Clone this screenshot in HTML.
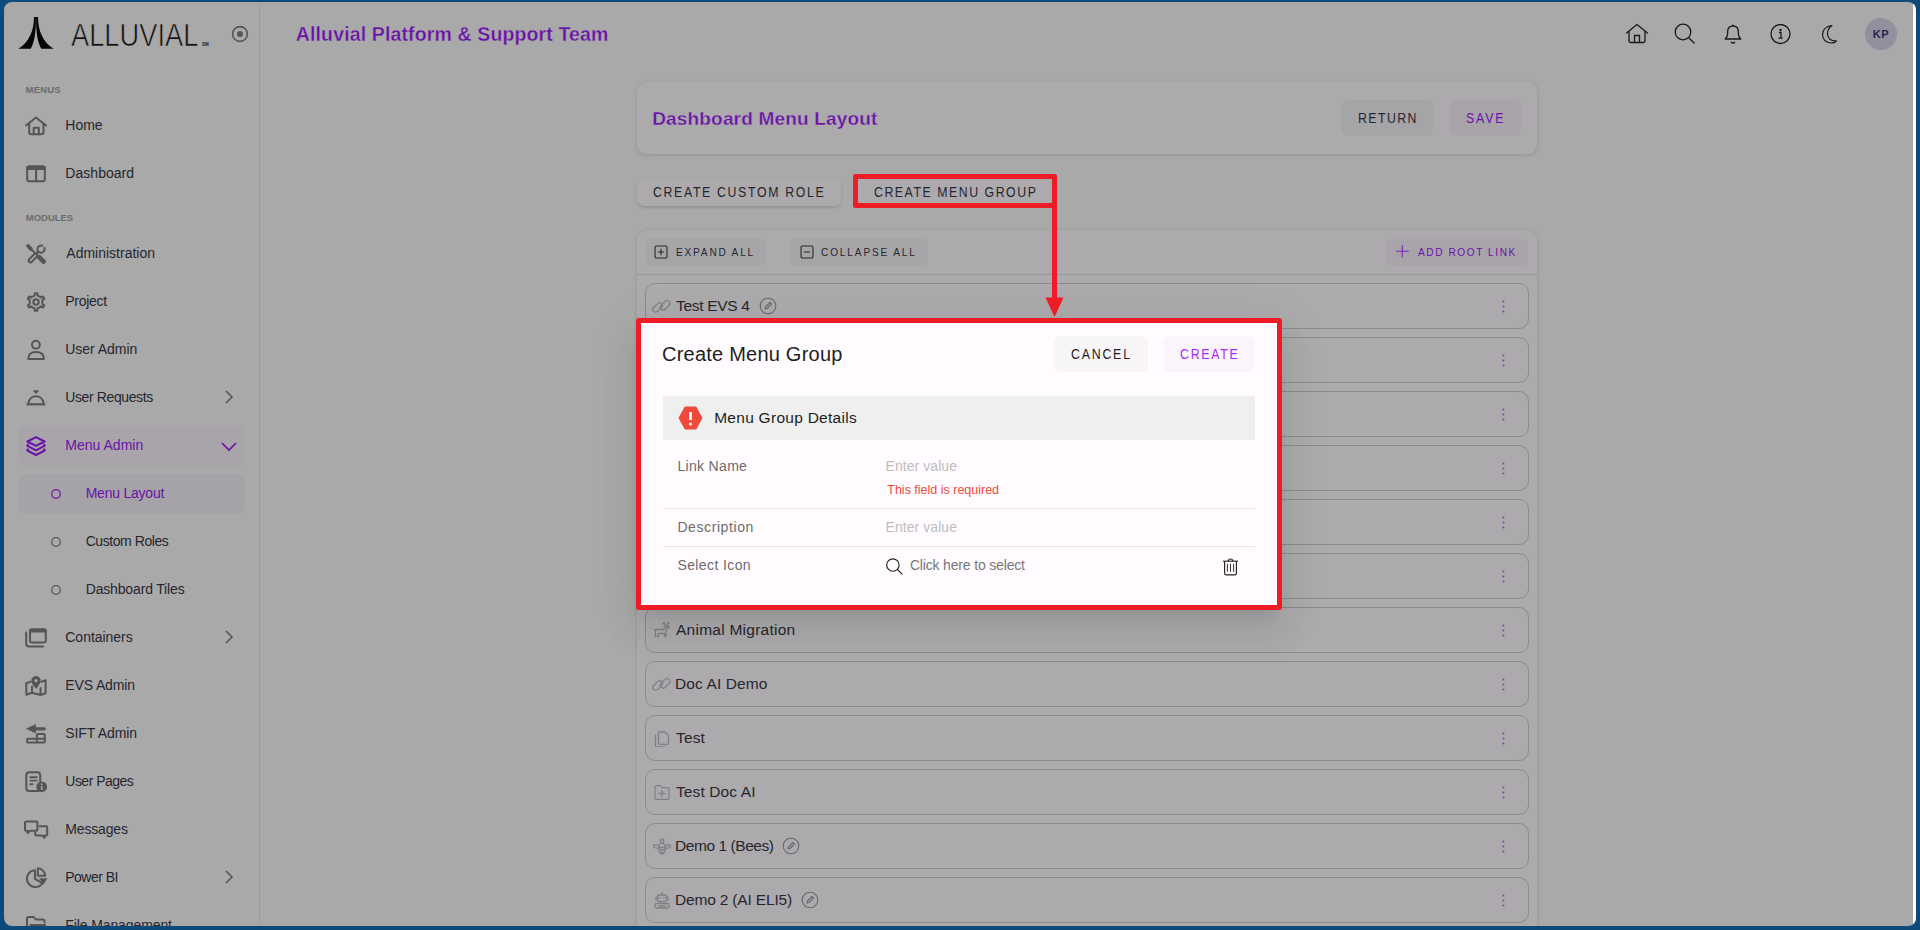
<!DOCTYPE html>
<html><head><meta charset="utf-8"><style>
html,body{margin:0;padding:0;width:1920px;height:930px;overflow:hidden;background:#0c4a7c;}
.win{position:absolute;left:4px;top:2px;width:1912px;height:923.5px;border-radius:8px;overflow:hidden;background:#a9a9a9;font-family:"Liberation Sans", sans-serif;}
.t{position:absolute;line-height:1;white-space:nowrap;}
</style></head><body>
<div class="win">
<div style="position:absolute;left:0;top:0;width:1920px;height:930px;transform:translate(-4px,-2px)">
<div style="position:absolute;left:259px;top:0px;width:1px;height:930px;background:#9d9d9d"></div>
<svg style="position:absolute;left:18px;top:16px;" width="36" height="34" viewBox="0 0 36 34"><defs><linearGradient id="lg" x1="0" y1="0" x2="0" y2="1"><stop offset="0" stop-color="#111"/><stop offset="1" stop-color="#111" stop-opacity="0"/></linearGradient></defs><path d="M16 1 H17.9 C17.9 12 17.6 24 12.8 32.7 H0.5 C11 26 16 15 16 1 Z" fill="#050505"/><path d="M20 1 H18.1 C18.1 12 18.4 24 23.2 32.7 H35.5 C25 26 20 15 20 1 Z" fill="#050505"/><rect x="17.4" y="1" width="1.2" height="14" fill="url(#lg)"/></svg>
<div class="t" style="left:71.00px;top:18.70px;font-size:32px;color:#111;font-weight:400;letter-spacing:0.000px;transform:scaleX(0.852);transform-origin:0 0;-webkit-text-stroke:0.7px #a9a9a9;">ALLUVIAL</div>
<div class="t" style="left:202.00px;top:42.79px;font-size:4.5px;color:#222;font-weight:700;letter-spacing:0.000px;">SM</div>
<svg style="position:absolute;left:231px;top:25px;" width="18" height="18" viewBox="0 0 18 18"><circle cx="9" cy="9" r="7.4" fill="none" stroke="#555" stroke-width="1.6"/><circle cx="9" cy="9" r="3" fill="#555"/></svg>
<div class="t" style="left:25.60px;top:84.85px;font-size:9.5px;color:#6b6b6b;font-weight:700;letter-spacing:0.150px;">MENUS</div>
<div class="t" style="left:25.80px;top:212.85px;font-size:9.5px;color:#6b6b6b;font-weight:700;letter-spacing:-0.017px;">MODULES</div>
<div style="position:absolute;left:18px;top:426px;width:227px;height:39.5px;background:#a8a4aa;border-radius:8px"></div>
<div style="position:absolute;left:18px;top:474px;width:227px;height:40px;background:#a5a3a7;border-radius:8px"></div>
<div class="t" style="left:65.30px;top:118.14px;font-size:14px;color:#26262e;font-weight:400;letter-spacing:0.000px;">Home</div>
<svg style="position:absolute;left:24px;top:113.5px;overflow:visible" width="24" height="24" viewBox="0 0 24 24"><path d="M2 11.5 L12 3.5 L22 11.5" fill="none" stroke="#555555" stroke-width="2" stroke-linecap="round" stroke-linejoin="round"/><path d="M5.2 9.5 V18.3 Q5.2 20.3 7.2 20.3 H17.5 Q19.5 20.3 19.5 18.3 V9.5" fill="none" stroke="#555555" stroke-width="2" stroke-linecap="round" stroke-linejoin="round"/><path d="M9.7 20.3 V13.8 H14.8 V20.3" fill="none" stroke="#555555" stroke-width="2" stroke-linecap="round" stroke-linejoin="round"/></svg>
<div class="t" style="left:65.30px;top:166.14px;font-size:14px;color:#26262e;font-weight:400;letter-spacing:0.037px;">Dashboard</div>
<svg style="position:absolute;left:24px;top:161.5px;overflow:visible" width="24" height="24" viewBox="0 0 24 24"><rect x="3.2" y="4.5" width="17.6" height="14.8" rx="2" fill="none" stroke="#555555" stroke-width="2" stroke-linecap="round" stroke-linejoin="round"/><rect x="2.5" y="3.6" width="19" height="4.4" rx="1.5" fill="#555555"/><path d="M12.1 8 V19.3" fill="none" stroke="#555555" stroke-width="2" stroke-linecap="round" stroke-linejoin="round"/></svg>
<div class="t" style="left:66.30px;top:246.14px;font-size:14px;color:#26262e;font-weight:400;letter-spacing:0.000px;">Administration</div>
<svg style="position:absolute;left:24px;top:241.5px;overflow:visible" width="24" height="24" viewBox="0 0 24 24"><path d="M4 4 L6.8 6.8" stroke="#555555" stroke-width="3.8" stroke-linecap="round"/><path d="M6.5 6.5 L14.5 14.5" stroke="#555555" stroke-width="1.8"/><path d="M15.2 15.2 L19.6 19.6" stroke="#555555" stroke-width="4.6" stroke-linecap="round"/><path d="M11 11.4 L5.2 17.2 Q3.9 18.5 5.2 19.8 Q6.5 21.1 7.8 19.8 L13.2 14.4" fill="none" stroke="#555555" stroke-width="2" stroke-linecap="round" stroke-linejoin="round" stroke-width="1.8"/><path d="M18.2 3.7 A3.6 3.6 0 1 0 20.4 5.9" fill="none" stroke="#555555" stroke-width="2" stroke-linecap="round" stroke-linejoin="round" stroke-width="2.2"/><path d="M14.4 9.6 L12.4 11.6" stroke="#555555" stroke-width="2.2"/></svg>
<div class="t" style="left:65.30px;top:294.14px;font-size:14px;color:#26262e;font-weight:400;letter-spacing:-0.283px;">Project</div>
<svg style="position:absolute;left:24px;top:289.5px;overflow:visible" width="24" height="24" viewBox="0 0 24 24"><path d="M15.30 17.58 L13.53 18.28 L13.35 20.75 L10.75 20.75 L10.57 18.28 L8.80 17.58 L7.31 16.40 L5.08 17.48 L3.77 15.23 L5.83 13.83 L5.55 11.95 L5.83 10.07 L3.77 8.67 L5.08 6.42 L7.31 7.50 L8.80 6.32 L10.57 5.62 L10.75 3.15 L13.35 3.15 L13.53 5.62 L15.30 6.32 L16.79 7.50 L19.02 6.42 L20.33 8.67 L18.27 10.07 L18.55 11.95 L18.27 13.83 L20.33 15.23 L19.02 17.48 L16.79 16.40 Z" fill="none" stroke="#555555" stroke-width="2" stroke-linecap="round" stroke-linejoin="round" stroke-width="1.9"/><circle cx="12.05" cy="11.95" r="2.7" fill="none" stroke="#555555" stroke-width="2" stroke-linecap="round" stroke-linejoin="round" stroke-width="1.9"/></svg>
<div class="t" style="left:65.30px;top:342.14px;font-size:14px;color:#26262e;font-weight:400;letter-spacing:-0.033px;">User Admin</div>
<svg style="position:absolute;left:24px;top:337.5px;overflow:visible" width="24" height="24" viewBox="0 0 24 24"><circle cx="11.9" cy="6.7" r="3.9" fill="none" stroke="#555555" stroke-width="2" stroke-linecap="round" stroke-linejoin="round"/><path d="M4.3 20.9 Q4.3 14.1 12 14.1 Q19.9 14.1 19.9 20.9 Z" fill="none" stroke="#555555" stroke-width="2" stroke-linecap="round" stroke-linejoin="round"/></svg>
<div class="t" style="left:65.30px;top:390.14px;font-size:14px;color:#26262e;font-weight:400;letter-spacing:-0.392px;">User Requests</div>
<svg style="position:absolute;left:24px;top:385.5px;overflow:visible" width="24" height="24" viewBox="0 0 24 24"><path d="M9.5 5.3 H14.5 M12 5.3 V7.5" stroke="#555555" stroke-width="2"/><path d="M4.6 16.5 A7.5 7.5 0 0 1 19.4 16.5" fill="none" stroke="#555555" stroke-width="2" stroke-linecap="round" stroke-linejoin="round"/><path d="M2.5 18.3 H21.4" stroke="#555555" stroke-width="2.2"/></svg>
<div class="t" style="left:65.30px;top:438.14px;font-size:14px;color:#6a12a8;font-weight:400;letter-spacing:0.011px;">Menu Admin</div>
<svg style="position:absolute;left:24px;top:433.5px;overflow:visible" width="24" height="24" viewBox="0 0 24 24"><path d="M12 3.2 L20.6 7.5 L12 11.8 L3.4 7.5 Z" fill="none" stroke="#6a12a8" stroke-width="2" stroke-linecap="round" stroke-linejoin="round" stroke-width="1.9"/><path d="M4 10.6 Q2.6 11.4 4 12.2 L12 16.3 L20 12.2 Q21.4 11.4 20 10.6" fill="none" stroke="#6a12a8" stroke-width="2" stroke-linecap="round" stroke-linejoin="round" stroke-width="1.9"/><path d="M4 15.3 Q2.6 16.1 4 16.9 L12 21 L20 16.9 Q21.4 16.1 20 15.3" fill="none" stroke="#6a12a8" stroke-width="2" stroke-linecap="round" stroke-linejoin="round" stroke-width="1.9"/></svg>
<div class="t" style="left:65.30px;top:630.14px;font-size:14px;color:#26262e;font-weight:400;letter-spacing:-0.033px;">Containers</div>
<svg style="position:absolute;left:24px;top:625.5px;overflow:visible" width="24" height="24" viewBox="0 0 24 24"><rect x="6" y="3.4" width="15.8" height="13.2" rx="2" fill="none" stroke="#555555" stroke-width="2" stroke-linecap="round" stroke-linejoin="round"/><rect x="5.2" y="2.6" width="17.4" height="4" rx="1.5" fill="#555555"/><path d="M2.2 6.5 V17.5 Q2.2 20.5 5.2 20.5 H19" fill="none" stroke="#555555" stroke-width="2" stroke-linecap="round" stroke-linejoin="round"/></svg>
<div class="t" style="left:65.30px;top:678.14px;font-size:14px;color:#26262e;font-weight:400;letter-spacing:-0.137px;">EVS Admin</div>
<svg style="position:absolute;left:24px;top:673.5px;overflow:visible" width="24" height="24" viewBox="0 0 24 24"><path d="M6.5 7.8 L2.3 9.3 V20.8 L8 18.8 L16.5 21 L21.6 19.2 V6.2 L17.5 7.7 M8 12.5 V18.8 M16.5 14 V21" fill="none" stroke="#555555" stroke-width="2" stroke-linecap="round" stroke-linejoin="round" stroke-width="1.9"/><path d="M12 15 Q7.3 9.5 7.3 6.7 A4.7 4.7 0 0 1 16.7 6.7 Q16.7 9.5 12 15 Z" fill="#555555"/><circle cx="12" cy="6.6" r="1.6" fill="#a9a9a9"/></svg>
<div class="t" style="left:65.30px;top:726.14px;font-size:14px;color:#26262e;font-weight:400;letter-spacing:-0.133px;">SIFT Admin</div>
<svg style="position:absolute;left:24px;top:721.5px;overflow:visible" width="24" height="24" viewBox="0 0 24 24"><path d="M2 6.8 L11.9 2.1 V11.5 Z" fill="#555555"/><path d="M11 6.8 H20.2" stroke="#555555" stroke-width="3.2" stroke-linecap="round"/><rect x="3" y="16.7" width="17.8" height="3.9" rx="1.2" fill="none" stroke="#555555" stroke-width="2" stroke-linecap="round" stroke-linejoin="round" stroke-width="2"/><path d="M12.9 16.7 V20.6" stroke="#555555" stroke-width="2"/><path d="M12.9 16.9 V13 Q12.9 12.1 13.8 12.1 H19.9 Q20.8 12.1 20.8 13 V16.9" fill="none" stroke="#555555" stroke-width="2" stroke-linecap="round" stroke-linejoin="round" stroke-width="2"/></svg>
<div class="t" style="left:65.30px;top:774.14px;font-size:14px;color:#26262e;font-weight:400;letter-spacing:-0.522px;">User Pages</div>
<svg style="position:absolute;left:24px;top:769.5px;overflow:visible" width="24" height="24" viewBox="0 0 24 24"><path d="M14.5 20.9 H5.2 Q2.3 20.9 2.3 18 V5.2 Q2.3 2.3 5.2 2.3 H13.3 Q16.2 2.3 16.2 5.2 V12.5" fill="none" stroke="#555555" stroke-width="2" stroke-linecap="round" stroke-linejoin="round" stroke-width="1.9"/><path d="M6.3 7.2 H12.8 M6.3 10.6 H12.8 M6.3 14.2 H8.6" stroke="#555555" stroke-width="1.9" stroke-linecap="round"/><circle cx="17.7" cy="16.8" r="5.4" fill="#555555"/><circle cx="17.7" cy="14.2" r="0.9" fill="#a9a9a9"/><path d="M17.7 16 V20" stroke="#a9a9a9" stroke-width="1.5"/></svg>
<div class="t" style="left:65.30px;top:822.14px;font-size:14px;color:#26262e;font-weight:400;letter-spacing:-0.171px;">Messages</div>
<svg style="position:absolute;left:24px;top:817.5px;overflow:visible" width="24" height="24" viewBox="0 0 24 24"><path d="M1 4.6 Q1 3.4 2.2 3.4 H12.2 Q13.4 3.4 13.4 4.6 V11.6 Q13.4 12.8 12.2 12.8 H6.2 L3.6 15 V12.8 H2.2 Q1 12.8 1 11.6 Z" fill="none" stroke="#555555" stroke-width="2" stroke-linecap="round" stroke-linejoin="round" stroke-width="1.7"/><path d="M15.6 8.2 H22 Q23.2 8.2 23.2 9.4 V16.2 Q23.2 17.4 22 17.4 H20.6 V19.8 L18 17.4 H12.4 Q11.2 17.4 11.2 16.2 V14.6" fill="none" stroke="#555555" stroke-width="2" stroke-linecap="round" stroke-linejoin="round" stroke-width="1.7"/></svg>
<div class="t" style="left:65.30px;top:870.14px;font-size:14px;color:#26262e;font-weight:400;letter-spacing:-0.529px;">Power BI</div>
<svg style="position:absolute;left:24px;top:865.5px;overflow:visible" width="24" height="24" viewBox="0 0 24 24"><path d="M11 4.2 A8.4 8.4 0 1 0 18.4 17.2 L11 12.8 Z" fill="none" stroke="#555555" stroke-width="2" stroke-linecap="round" stroke-linejoin="round" stroke-width="1.9"/><path d="M13.8 2.2 A8 8 0 0 1 21.2 9.8 H13.8 Z" fill="none" stroke="#555555" stroke-width="2" stroke-linecap="round" stroke-linejoin="round" stroke-width="1.9"/><path d="M15 12.3 H23.3 L19.6 18.2 Z" fill="#555555"/></svg>
<div class="t" style="left:65.30px;top:918.14px;font-size:14px;color:#26262e;font-weight:400;letter-spacing:-0.107px;">File Management</div>
<svg style="position:absolute;left:24px;top:913.5px;overflow:visible" width="24" height="24" viewBox="0 0 24 24"><path d="M3 20 V4.5 Q3 3 4.5 3 H9.5 L12 5.5 H19 Q20.5 5.5 20.5 7 V8.5" fill="none" stroke="#555555" stroke-width="2" stroke-linecap="round" stroke-linejoin="round"/><path d="M6 10 H22 L20 20 H3" fill="#555555"/></svg>
<div class="t" style="left:85.70px;top:486.14px;font-size:14px;color:#6a12a8;font-weight:400;letter-spacing:-0.230px;">Menu Layout</div>
<svg style="position:absolute;left:50px;top:488px;" width="12" height="12" viewBox="0 0 12 12"><circle cx="6" cy="6" r="4.3" fill="none" stroke="#6a12a8" stroke-width="1.2"/></svg>
<div class="t" style="left:85.70px;top:534.14px;font-size:14px;color:#26262e;font-weight:400;letter-spacing:-0.436px;">Custom Roles</div>
<svg style="position:absolute;left:50px;top:536px;" width="12" height="12" viewBox="0 0 12 12"><circle cx="6" cy="6" r="4.3" fill="none" stroke="#555" stroke-width="1.2"/></svg>
<div class="t" style="left:85.70px;top:582.14px;font-size:14px;color:#26262e;font-weight:400;letter-spacing:-0.157px;">Dashboard Tiles</div>
<svg style="position:absolute;left:50px;top:584px;" width="12" height="12" viewBox="0 0 12 12"><circle cx="6" cy="6" r="4.3" fill="none" stroke="#555" stroke-width="1.2"/></svg>
<svg style="position:absolute;left:223px;top:389px;" width="12" height="16" viewBox="0 0 12 16"><path d="M3 2 L9 8 L3 14" fill="none" stroke="#555" stroke-width="1.5"/></svg>
<svg style="position:absolute;left:223px;top:629px;" width="12" height="16" viewBox="0 0 12 16"><path d="M3 2 L9 8 L3 14" fill="none" stroke="#555" stroke-width="1.5"/></svg>
<svg style="position:absolute;left:223px;top:869px;" width="12" height="16" viewBox="0 0 12 16"><path d="M3 2 L9 8 L3 14" fill="none" stroke="#555" stroke-width="1.5"/></svg>
<svg style="position:absolute;left:220px;top:440px;" width="18" height="12" viewBox="0 0 18 12"><path d="M2 3 L9 10 L16 3" fill="none" stroke="#6a12a8" stroke-width="1.6"/></svg>
<div class="t" style="left:295.80px;top:25.08px;font-size:19.5px;color:#6a12a8;font-weight:700;letter-spacing:0.135px;-webkit-text-stroke:0.35px #a9a9a9;">Alluvial Platform &amp; Support Team</div>
<svg style="position:absolute;left:1625px;top:23px;" width="24" height="21" viewBox="0 0 24 21"><path d="M1.5 10 L12 1.5 L22.5 10" fill="none" stroke="#1a1a1a" stroke-width="1.3" stroke-linecap="round" stroke-linejoin="round"/><path d="M4 8 V17.5 Q4 19.5 6 19.5 H18 Q20 19.5 20 17.5 V8" fill="none" stroke="#1a1a1a" stroke-width="1.3"/><path d="M9.5 19.5 V12.5 H14.5 V19.5" fill="none" stroke="#1a1a1a" stroke-width="1.3"/></svg>
<svg style="position:absolute;left:1674px;top:23px;" width="22" height="21" viewBox="0 0 22 21"><circle cx="9" cy="9" r="7.8" fill="none" stroke="#1a1a1a" stroke-width="1.3"/><path d="M14.5 14.5 L20.5 20.5" stroke="#1a1a1a" stroke-width="1.3"/></svg>
<svg style="position:absolute;left:1723px;top:22.7px;" width="20" height="22" viewBox="0 0 20 22"><path d="M2.2 16 Q4.6 14 4.6 11 V9 Q4.6 3 10 3 Q15.4 3 15.4 9 V11 Q15.4 14 17.8 16 Z" fill="none" stroke="#1a1a1a" stroke-width="1.3" stroke-linejoin="round"/><path d="M8 19 Q10 21 12 19" fill="none" stroke="#1a1a1a" stroke-width="1.2"/><path d="M10 1.5 V3" stroke="#1a1a1a" stroke-width="1.2"/></svg>
<svg style="position:absolute;left:1770px;top:23.5px;" width="22" height="21" viewBox="0 0 22 21"><circle cx="10.5" cy="10" r="9.5" fill="none" stroke="#1a1a1a" stroke-width="1.3"/><circle cx="10.5" cy="6" r="1.2" fill="#1a1a1a"/><path d="M9 8.5 H11 V14 M8.6 14.2 H12.6" fill="none" stroke="#1a1a1a" stroke-width="1.3"/></svg>
<svg style="position:absolute;left:1820px;top:23.5px;" width="18" height="21" viewBox="0 0 18 21"><path d="M12 1.5 Q3 2.5 2.5 10.5 Q3 18.5 11 19 Q14.5 19 16.5 17 Q8 17 7.5 10 Q7.5 4.5 12 1.5 Z" fill="none" stroke="#1a1a1a" stroke-width="1.2" stroke-linejoin="round"/></svg>
<div style="position:absolute;left:1865px;top:18px;width:32px;height:32px;background:#928f9f;border-radius:50%"></div>
<div class="t" style="left:1872.80px;top:29.18px;font-size:11px;color:#26224a;font-weight:700;letter-spacing:0.500px;">KP</div>
<div style="position:absolute;left:637px;top:82px;width:900px;height:72px;background:#acaaac;border-radius:9px;box-shadow:0 1px 4px rgba(0,0,0,0.15)"></div>
<div class="t" style="left:652.20px;top:108.71px;font-size:19px;color:#6a12a8;font-weight:700;letter-spacing:0.170px;-webkit-text-stroke:0.35px #acaaac;">Dashboard Menu Layout</div>
<div style="position:absolute;left:1341px;top:100px;width:92px;height:35.5px;background:#a5a4a6;border-radius:7px"></div>
<div class="t" style="left:1358.42px;top:111.04px;font-size:14px;color:#26262e;font-weight:400;letter-spacing:1.618px;transform:scaleX(0.88);transform-origin:0 0;">RETURN</div>
<div style="position:absolute;left:1449px;top:100px;width:72px;height:35.5px;background:#a8a4aa;border-radius:7px"></div>
<div class="t" style="left:1465.82px;top:111.04px;font-size:14px;color:#6a12a8;font-weight:400;letter-spacing:2.083px;transform:scaleX(0.88);transform-origin:0 0;">SAVE</div>
<div style="position:absolute;left:637px;top:178px;width:204px;height:28px;background:#acaaac;border-radius:7px;box-shadow:0 2px 3px rgba(0,0,0,0.12)"></div>
<div class="t" style="left:653.12px;top:185.14px;font-size:14px;color:#26262e;font-weight:400;letter-spacing:1.873px;transform:scaleX(0.88);transform-origin:0 0;">CREATE CUSTOM ROLE</div>
<div style="position:absolute;left:853px;top:178px;width:203px;height:28px;background:#acaaac;border-radius:7px;"></div>
<div class="t" style="left:873.52px;top:185.34px;font-size:14px;color:#26262e;font-weight:400;letter-spacing:1.740px;transform:scaleX(0.88);transform-origin:0 0;">CREATE MENU GROUP</div>
<div style="position:absolute;left:637px;top:230px;width:900px;height:720px;background:#acaaac;border-radius:10px;box-shadow:0 1px 4px rgba(0,0,0,0.14)"></div>
<div style="position:absolute;left:637px;top:274px;width:900px;height:1px;background:#9a999a"></div>
<div style="position:absolute;left:645px;top:238px;width:121px;height:27.5px;background:#a6a5a7;border-radius:7px"></div>
<svg style="position:absolute;left:654px;top:245px;" width="14" height="14" viewBox="0 0 14 14"><rect x="1.05" y="1.05" width="11.9" height="11.9" rx="1.3" fill="none" stroke="#2a2a2a" stroke-width="1.1"/><path d="M7 3.8 V10.2 M3.8 7 H10.2" stroke="#2a2a2a" stroke-width="1.1"/></svg>
<div class="t" style="left:675.62px;top:247.26px;font-size:11.5px;color:#26262e;font-weight:400;letter-spacing:2.028px;transform:scaleX(0.88);transform-origin:0 0;">EXPAND ALL</div>
<div style="position:absolute;left:790px;top:238px;width:138px;height:27.5px;background:#a6a5a7;border-radius:7px"></div>
<svg style="position:absolute;left:799.5px;top:245px;" width="14" height="14" viewBox="0 0 14 14"><rect x="1.05" y="1.05" width="11.9" height="11.9" rx="1.3" fill="none" stroke="#2a2a2a" stroke-width="1.1"/><path d="M3.8 7 H10.2" stroke="#2a2a2a" stroke-width="1.1"/></svg>
<div class="t" style="left:820.92px;top:247.26px;font-size:11.5px;color:#26262e;font-weight:400;letter-spacing:2.091px;transform:scaleX(0.88);transform-origin:0 0;">COLLAPSE ALL</div>
<div style="position:absolute;left:1386px;top:238.5px;width:142px;height:27px;background:#a8a4aa;border-radius:7px"></div>
<svg style="position:absolute;left:1395.5px;top:245px;" width="13" height="13" viewBox="0 0 13 13"><path d="M6.3 0 V12.4 M0 6.2 H12.8" stroke="#7a28b8" stroke-width="1.1"/></svg>
<div class="t" style="left:1417.90px;top:247.26px;font-size:11.5px;color:#6a12a8;font-weight:400;letter-spacing:1.778px;transform:scaleX(0.88);transform-origin:0 0;">ADD ROOT LINK</div>
<div style="position:absolute;left:645px;top:283px;width:884px;height:46px;border:1px solid #8c8a8c;border-radius:10px;box-sizing:border-box"></div>
<svg style="position:absolute;left:1500px;top:298.5px;" width="7" height="15" viewBox="0 0 7 15"><circle cx="3.4" cy="2.5" r="1.05" fill="#8a3ec2"/><circle cx="3.4" cy="7.5" r="1.05" fill="#8a3ec2"/><circle cx="3.4" cy="12.5" r="1.05" fill="#8a3ec2"/></svg>
<div class="t" style="left:676.00px;top:297.57px;font-size:15.5px;color:#26262e;font-weight:400;letter-spacing:-0.300px;">Test EVS 4</div>
<svg style="position:absolute;left:650px;top:295.5px;" width="24" height="20" viewBox="0 0 24 20"><g transform="rotate(-45 7.6 11.5)"><rect x="2.1" y="8.7" width="11" height="5.6" rx="2.8" fill="none" stroke="#828084" stroke-width="1.3" stroke-linecap="round" stroke-linejoin="round"/></g><g transform="rotate(-45 15.2 9.3)"><rect x="9.7" y="6.5" width="11" height="5.6" rx="2.8" fill="none" stroke="#828084" stroke-width="1.3" stroke-linecap="round" stroke-linejoin="round"/></g></svg>
<svg style="position:absolute;left:759.3px;top:297px;" width="18" height="18" viewBox="0 0 18 18"><circle cx="9" cy="9" r="7.8" fill="none" stroke="#6a686c" stroke-width="1.1"/><path d="M6 12 L6.5 10 L11 5.5 L12.5 7 L8 11.5 Z" fill="none" stroke="#6a686c" stroke-width="1.1" stroke-linejoin="round"/></svg>
<div style="position:absolute;left:645px;top:337px;width:884px;height:46px;border:1px solid #8c8a8c;border-radius:10px;box-sizing:border-box"></div>
<svg style="position:absolute;left:1500px;top:352.5px;" width="7" height="15" viewBox="0 0 7 15"><circle cx="3.4" cy="2.5" r="1.05" fill="#8a3ec2"/><circle cx="3.4" cy="7.5" r="1.05" fill="#8a3ec2"/><circle cx="3.4" cy="12.5" r="1.05" fill="#8a3ec2"/></svg>
<div style="position:absolute;left:645px;top:391px;width:884px;height:46px;border:1px solid #8c8a8c;border-radius:10px;box-sizing:border-box"></div>
<svg style="position:absolute;left:1500px;top:406.5px;" width="7" height="15" viewBox="0 0 7 15"><circle cx="3.4" cy="2.5" r="1.05" fill="#8a3ec2"/><circle cx="3.4" cy="7.5" r="1.05" fill="#8a3ec2"/><circle cx="3.4" cy="12.5" r="1.05" fill="#8a3ec2"/></svg>
<div style="position:absolute;left:645px;top:445px;width:884px;height:46px;border:1px solid #8c8a8c;border-radius:10px;box-sizing:border-box"></div>
<svg style="position:absolute;left:1500px;top:460.5px;" width="7" height="15" viewBox="0 0 7 15"><circle cx="3.4" cy="2.5" r="1.05" fill="#8a3ec2"/><circle cx="3.4" cy="7.5" r="1.05" fill="#8a3ec2"/><circle cx="3.4" cy="12.5" r="1.05" fill="#8a3ec2"/></svg>
<div style="position:absolute;left:645px;top:499px;width:884px;height:46px;border:1px solid #8c8a8c;border-radius:10px;box-sizing:border-box"></div>
<svg style="position:absolute;left:1500px;top:514.5px;" width="7" height="15" viewBox="0 0 7 15"><circle cx="3.4" cy="2.5" r="1.05" fill="#8a3ec2"/><circle cx="3.4" cy="7.5" r="1.05" fill="#8a3ec2"/><circle cx="3.4" cy="12.5" r="1.05" fill="#8a3ec2"/></svg>
<div style="position:absolute;left:645px;top:553px;width:884px;height:46px;border:1px solid #8c8a8c;border-radius:10px;box-sizing:border-box"></div>
<svg style="position:absolute;left:1500px;top:568.5px;" width="7" height="15" viewBox="0 0 7 15"><circle cx="3.4" cy="2.5" r="1.05" fill="#8a3ec2"/><circle cx="3.4" cy="7.5" r="1.05" fill="#8a3ec2"/><circle cx="3.4" cy="12.5" r="1.05" fill="#8a3ec2"/></svg>
<div style="position:absolute;left:645px;top:607px;width:884px;height:46px;border:1px solid #8c8a8c;border-radius:10px;box-sizing:border-box"></div>
<svg style="position:absolute;left:1500px;top:622.5px;" width="7" height="15" viewBox="0 0 7 15"><circle cx="3.4" cy="2.5" r="1.05" fill="#8a3ec2"/><circle cx="3.4" cy="7.5" r="1.05" fill="#8a3ec2"/><circle cx="3.4" cy="12.5" r="1.05" fill="#8a3ec2"/></svg>
<div class="t" style="left:676.00px;top:621.57px;font-size:15.5px;color:#26262e;font-weight:400;letter-spacing:0.253px;">Animal Migration</div>
<svg style="position:absolute;left:650px;top:618.5px;" width="24" height="20" viewBox="0 0 24 20"><path d="M5.5 17.5 V12 Q5.5 10.5 7 10.5 H14 L15 7 H18.5 L19 9 H16.5 L16 11.5 V17.5 H14.5 V14.5 H8.5 V17.5 H7 M5.6 11.2 L4.2 10.2 M15.3 7 L13.8 3.5 M16.6 7 L18.2 3.5 M14.5 5 L12.8 4.6 M17.5 5 L19.2 4.6" fill="none" stroke="#828084" stroke-width="1.3" stroke-linecap="round" stroke-linejoin="round"/></svg>
<div style="position:absolute;left:645px;top:661px;width:884px;height:46px;border:1px solid #8c8a8c;border-radius:10px;box-sizing:border-box"></div>
<svg style="position:absolute;left:1500px;top:676.5px;" width="7" height="15" viewBox="0 0 7 15"><circle cx="3.4" cy="2.5" r="1.05" fill="#8a3ec2"/><circle cx="3.4" cy="7.5" r="1.05" fill="#8a3ec2"/><circle cx="3.4" cy="12.5" r="1.05" fill="#8a3ec2"/></svg>
<div class="t" style="left:675.00px;top:675.57px;font-size:15.5px;color:#26262e;font-weight:400;letter-spacing:0.110px;">Doc AI Demo</div>
<svg style="position:absolute;left:650px;top:673.5px;" width="24" height="20" viewBox="0 0 24 20"><g transform="rotate(-45 7.6 11.5)"><rect x="2.1" y="8.7" width="11" height="5.6" rx="2.8" fill="none" stroke="#828084" stroke-width="1.3" stroke-linecap="round" stroke-linejoin="round"/></g><g transform="rotate(-45 15.2 9.3)"><rect x="9.7" y="6.5" width="11" height="5.6" rx="2.8" fill="none" stroke="#828084" stroke-width="1.3" stroke-linecap="round" stroke-linejoin="round"/></g></svg>
<div style="position:absolute;left:645px;top:715px;width:884px;height:46px;border:1px solid #8c8a8c;border-radius:10px;box-sizing:border-box"></div>
<svg style="position:absolute;left:1500px;top:730.5px;" width="7" height="15" viewBox="0 0 7 15"><circle cx="3.4" cy="2.5" r="1.05" fill="#8a3ec2"/><circle cx="3.4" cy="7.5" r="1.05" fill="#8a3ec2"/><circle cx="3.4" cy="12.5" r="1.05" fill="#8a3ec2"/></svg>
<div class="t" style="left:676.00px;top:729.57px;font-size:15.5px;color:#26262e;font-weight:400;letter-spacing:0.167px;">Test</div>
<svg style="position:absolute;left:650px;top:726.5px;" width="24" height="20" viewBox="0 0 24 20"><path d="M8.5 5 H15 L18.5 8.5 V16 Q18.5 17.3 17.2 17.3 H9.8 Q8.5 17.3 8.5 16 Z" fill="none" stroke="#828084" stroke-width="1.3" stroke-linecap="round" stroke-linejoin="round"/><path d="M5.5 8 V18.8 Q5.5 20 6.8 20 H15" fill="none" stroke="#828084" stroke-width="1.3" stroke-linecap="round" stroke-linejoin="round"/></svg>
<div style="position:absolute;left:645px;top:769px;width:884px;height:46px;border:1px solid #8c8a8c;border-radius:10px;box-sizing:border-box"></div>
<svg style="position:absolute;left:1500px;top:784.5px;" width="7" height="15" viewBox="0 0 7 15"><circle cx="3.4" cy="2.5" r="1.05" fill="#8a3ec2"/><circle cx="3.4" cy="7.5" r="1.05" fill="#8a3ec2"/><circle cx="3.4" cy="12.5" r="1.05" fill="#8a3ec2"/></svg>
<div class="t" style="left:676.00px;top:783.57px;font-size:15.5px;color:#26262e;font-weight:400;letter-spacing:0.110px;">Test Doc AI</div>
<svg style="position:absolute;left:650px;top:780.5px;" width="24" height="20" viewBox="0 0 24 20"><path d="M5 6 Q5 4.6 6.4 4.6 H10 L12 6.6 H17.6 Q19 6.6 19 8 V17 Q19 18.4 17.6 18.4 H6.4 Q5 18.4 5 17 Z" fill="none" stroke="#828084" stroke-width="1.3" stroke-linecap="round" stroke-linejoin="round"/><path d="M12 9.5 V15.5 M9 12.5 H15" fill="none" stroke="#828084" stroke-width="1.3" stroke-linecap="round" stroke-linejoin="round"/></svg>
<div style="position:absolute;left:645px;top:823px;width:884px;height:46px;border:1px solid #8c8a8c;border-radius:10px;box-sizing:border-box"></div>
<svg style="position:absolute;left:1500px;top:838.5px;" width="7" height="15" viewBox="0 0 7 15"><circle cx="3.4" cy="2.5" r="1.05" fill="#8a3ec2"/><circle cx="3.4" cy="7.5" r="1.05" fill="#8a3ec2"/><circle cx="3.4" cy="12.5" r="1.05" fill="#8a3ec2"/></svg>
<div class="t" style="left:675.00px;top:837.57px;font-size:15.5px;color:#26262e;font-weight:400;letter-spacing:-0.433px;">Demo 1 (Bees)</div>
<svg style="position:absolute;left:650px;top:834.5px;" width="24" height="20" viewBox="0 0 24 20"><ellipse cx="12" cy="13.5" rx="3.2" ry="5.5" fill="none" stroke="#828084" stroke-width="1.3" stroke-linecap="round" stroke-linejoin="round"/><circle cx="12" cy="6.5" r="1.8" fill="none" stroke="#828084" stroke-width="1.3" stroke-linecap="round" stroke-linejoin="round"/><path d="M9 11 Q4 8.5 3.5 11 Q3.5 13.5 8.8 13 M15 11 Q20 8.5 20.5 11 Q20.5 13.5 15.2 13 M9.2 12.5 H14.8 M9.2 15 H14.8 M10 17.5 H14 M10.5 3.8 L11.2 4.9 M13.5 3.8 L12.8 4.9" fill="none" stroke="#828084" stroke-width="1.3" stroke-linecap="round" stroke-linejoin="round"/></svg>
<svg style="position:absolute;left:781.5px;top:837px;" width="18" height="18" viewBox="0 0 18 18"><circle cx="9" cy="9" r="7.8" fill="none" stroke="#6a686c" stroke-width="1.1"/><path d="M6 12 L6.5 10 L11 5.5 L12.5 7 L8 11.5 Z" fill="none" stroke="#6a686c" stroke-width="1.1" stroke-linejoin="round"/></svg>
<div style="position:absolute;left:645px;top:877px;width:884px;height:46px;border:1px solid #8c8a8c;border-radius:10px;box-sizing:border-box"></div>
<svg style="position:absolute;left:1500px;top:892.5px;" width="7" height="15" viewBox="0 0 7 15"><circle cx="3.4" cy="2.5" r="1.05" fill="#8a3ec2"/><circle cx="3.4" cy="7.5" r="1.05" fill="#8a3ec2"/><circle cx="3.4" cy="12.5" r="1.05" fill="#8a3ec2"/></svg>
<div class="t" style="left:675.00px;top:891.57px;font-size:15.5px;color:#26262e;font-weight:400;letter-spacing:-0.173px;">Demo 2 (AI ELI5)</div>
<svg style="position:absolute;left:650px;top:888.5px;" width="24" height="20" viewBox="0 0 24 20"><rect x="7.5" y="6" width="9" height="6.5" rx="1.5" fill="none" stroke="#828084" stroke-width="1.3" stroke-linecap="round" stroke-linejoin="round"/><circle cx="10" cy="9" r="0.9" fill="#828084"/><circle cx="14" cy="9" r="0.9" fill="#828084"/><path d="M12 6 V3.8 M6 8 V11 M18 8 V11 M6.5 14.5 H17.5 Q19 14.5 19 16 V17.5 Q19 19 17.5 19 H6.5 Q5 19 5 17.5 V16 Q5 14.5 6.5 14.5 Z M8.5 17 H15.5" fill="none" stroke="#828084" stroke-width="1.3" stroke-linecap="round" stroke-linejoin="round"/></svg>
<svg style="position:absolute;left:801px;top:891px;" width="18" height="18" viewBox="0 0 18 18"><circle cx="9" cy="9" r="7.8" fill="none" stroke="#6a686c" stroke-width="1.1"/><path d="M6 12 L6.5 10 L11 5.5 L12.5 7 L8 11.5 Z" fill="none" stroke="#6a686c" stroke-width="1.1" stroke-linejoin="round"/></svg>
<div style="position:absolute;left:636px;top:318px;width:645.5px;height:291.5px;background:#fffbff;border:5px solid #ee1c25;box-sizing:border-box;border-radius:3px;box-shadow:0 11px 15px -7px rgba(0,0,0,0.07), 0 24px 38px 3px rgba(0,0,0,0.05), 0 9px 46px 8px rgba(0,0,0,0.05)"></div>
<div class="t" style="left:662.00px;top:344.06px;font-size:20px;color:#1e1e1e;font-weight:400;letter-spacing:0.225px;">Create Menu Group</div>
<div style="position:absolute;left:1054px;top:336px;width:94px;height:36px;background:#f7f5f7;border-radius:7px"></div>
<div class="t" style="left:1070.62px;top:347.34px;font-size:14px;color:#222;font-weight:400;letter-spacing:2.050px;transform:scaleX(0.88);transform-origin:0 0;">CANCEL</div>
<div style="position:absolute;left:1164px;top:336px;width:91px;height:36px;background:#faf4fd;border-radius:7px"></div>
<div class="t" style="left:1180.32px;top:347.34px;font-size:14px;color:#a32cf0;font-weight:400;letter-spacing:1.973px;transform:scaleX(0.88);transform-origin:0 0;">CREATE</div>
<div style="position:absolute;left:663px;top:396px;width:592px;height:44px;background:#eeefee"></div>
<svg style="position:absolute;left:678px;top:406px;" width="25" height="24" viewBox="0 0 25 24"><path d="M7 1 H18 L24 12 L18 23 H7 L1 12 Z" fill="#f0483a" stroke="#f0483a" stroke-width="1" stroke-linejoin="round"/><path d="M12.5 6 V14" stroke="#fff" stroke-width="2.6"/><circle cx="12.5" cy="18" r="1.5" fill="#fff"/></svg>
<div class="t" style="left:714.20px;top:409.77px;font-size:15.5px;color:#1e1e1e;font-weight:400;letter-spacing:0.271px;">Menu Group Details</div>
<div class="t" style="left:677.40px;top:459.14px;font-size:14px;color:#6b6b6b;font-weight:400;letter-spacing:0.325px;">Link Name</div>
<div class="t" style="left:885.60px;top:459.14px;font-size:14px;color:#bdbdbd;font-weight:400;letter-spacing:0.050px;">Enter value</div>
<div class="t" style="left:887.30px;top:484.21px;font-size:12.5px;color:#f04a3c;font-weight:400;letter-spacing:-0.005px;">This field is required</div>
<div style="position:absolute;left:663px;top:508px;width:592px;height:1px;background:#e6e4e6"></div>
<div class="t" style="left:677.40px;top:520.14px;font-size:14px;color:#6b6b6b;font-weight:400;letter-spacing:0.590px;">Description</div>
<div class="t" style="left:885.60px;top:520.14px;font-size:14px;color:#bdbdbd;font-weight:400;letter-spacing:0.050px;">Enter value</div>
<div style="position:absolute;left:663px;top:546px;width:592px;height:1px;background:#e6e4e6"></div>
<div class="t" style="left:677.40px;top:558.14px;font-size:14px;color:#6b6b6b;font-weight:400;letter-spacing:0.400px;">Select Icon</div>
<svg style="position:absolute;left:886px;top:557.5px;" width="18" height="18" viewBox="0 0 18 18"><circle cx="6.9" cy="7" r="6.2" fill="none" stroke="#262626" stroke-width="1.15"/><path d="M11.4 11.5 L16.4 16.3" stroke="#262626" stroke-width="1.15"/></svg>
<div class="t" style="left:909.90px;top:558.14px;font-size:14px;color:#777;font-weight:400;letter-spacing:-0.168px;">Click here to select</div>
<svg style="position:absolute;left:1222px;top:558px;" width="17" height="18" viewBox="0 0 17 18"><path d="M1 3.2 H16" stroke="#222" stroke-width="1.15"/><path d="M6.2 3 Q6.2 1 8.5 1 Q10.8 1 10.8 3" fill="none" stroke="#222" stroke-width="1.1"/><path d="M2.6 3.5 V15.2 Q2.6 16.8 4.3 16.8 H12.7 Q14.4 16.8 14.4 15.2 V3.5" fill="none" stroke="#222" stroke-width="1.15"/><path d="M5.4 5.8 V13.8 M8.5 5.8 V13.8 M11.6 5.8 V13.8" stroke="#333" stroke-width="1"/></svg>
<div style="position:absolute;left:853px;top:174px;width:203.5px;height:34px;border:5px solid #ee1c25;box-sizing:border-box;border-radius:2px"></div>
<div style="position:absolute;left:1052px;top:204px;width:4.5px;height:95px;background:#ee1c25"></div>
<svg style="position:absolute;left:1045px;top:297px;" width="19" height="21" viewBox="0 0 19 21"><path d="M0.5 0.5 L18.5 0.5 L9.5 20 Z" fill="#ee1c25"/></svg>
</div>
<div style="position:absolute;left:1909px;top:0;width:3px;height:930px;background:#fff"></div>
</div>
</body></html>
